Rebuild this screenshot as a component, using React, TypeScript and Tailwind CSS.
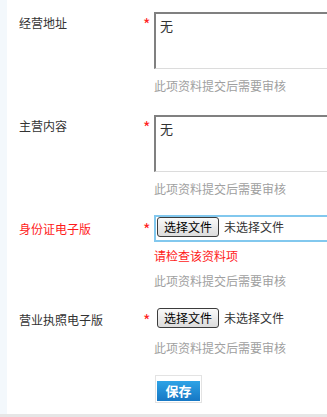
import React from "react";

const font = { fontFamily: '"Noto Sans CJK SC", "Noto Sans", sans-serif' };

function Star() {
  return (
    <span className="block w-[13px] shrink-0 pl-[2px] text-[16px] leading-[18px] text-[#ff2222]">
      *
    </span>
  );
}

function Hint({ className = "" }: { className?: string }) {
  return (
    <div className={`whitespace-nowrap text-[12px] leading-[16px] text-[#a0a0a0] ${className}`}>
      此项资料提交后需要审核
    </div>
  );
}

function TextRow({ label, value, className = "" }: { label: string; value: string; className?: string }) {
  return (
    <div className={`flex items-start ${className}`}>
      <div className="w-[134px] shrink-0 pl-[12px] pt-[2px] text-[12px] leading-[18px] text-[#333]">
        {label}
      </div>
      <div className="shrink-0 pt-[3px]">
        <Star />
      </div>
      <div className="flex shrink-0 flex-col">
        <div className="h-[57px] w-[220px] border-t-2 border-l-2 border-b border-r border-t-[#808080] border-l-[#808080] border-b-[#dcdcdc] border-r-[#dcdcdc] bg-white px-[4px] pt-[3px] text-[13px] leading-[18px] text-[#333]">
          {value}
        </div>
        <Hint className="mt-[9px]" />
      </div>
    </div>
  );
}

function FileRow({
  label,
  error,
  className = "",
}: {
  label: string;
  error?: boolean;
  className?: string;
}) {
  return (
    <div className={`flex items-start ${className}`}>
      <div
        className={`w-[134px] shrink-0 pl-[12px] pt-[5px] text-[12px] leading-[18px] ${
          error ? "text-[#ff1a1a]" : "text-[#333]"
        }`}
      >
        {label}
      </div>
      <div className="shrink-0 pt-[5px]">
        <Star />
      </div>
      <div className="flex shrink-0 flex-col">
        <div
          className={`flex h-[27px] w-[220px] items-start border-2 pl-[1px] pt-0 ${
            error ? "border-[#82c8ee]" : "border-transparent"
          }`}
        >
          <button className="h-[20px] rounded-[3px] border border-[#3c3c3c] bg-gradient-to-b from-[#fafafa] to-[#dcdcdc] px-[6px] text-[12px] leading-[16px] text-black">
            选择文件
          </button>
          <span className="ml-[5px] text-[12px] leading-[20px] text-[#333]">未选择文件</span>
        </div>
        {error && (
          <div className="mt-[6px] text-[12px] leading-[16px] text-[#ff1a1a]">请检查该资料项</div>
        )}
        <Hint className={error ? "mt-[9px]" : "mt-[7px]"} />
      </div>
    </div>
  );
}

export default function App() {
  return (
    <div className="h-[417px] w-[327px] overflow-hidden bg-[#e6e6e6]" style={font}>
      <div className="flex h-[414px]">
        <div className="w-[7px] shrink-0 bg-[#f3f8fc]" />
        <div className="flex-1 overflow-hidden bg-white pt-[12px]">
          <TextRow label="经营地址" value="无" />
          <TextRow label="主营内容" value="无" className="mt-[21px]" />
          <FileRow label="身份证电子版" error className="mt-[18px]" />
          <FileRow label="营业执照电子版" className="mt-[17px]" />
          <div className="mt-[19px] pl-[148px]">
            <div className="inline-block border border-[#e3e3e3] p-[1px]">
              <button className="h-[20px] w-[43px] bg-gradient-to-b from-[#2ea3e6] to-[#1677c4] text-[13px] font-bold leading-[20px] text-white">
                保存
              </button>
            </div>
          </div>
        </div>
      </div>
    </div>
  );
}
